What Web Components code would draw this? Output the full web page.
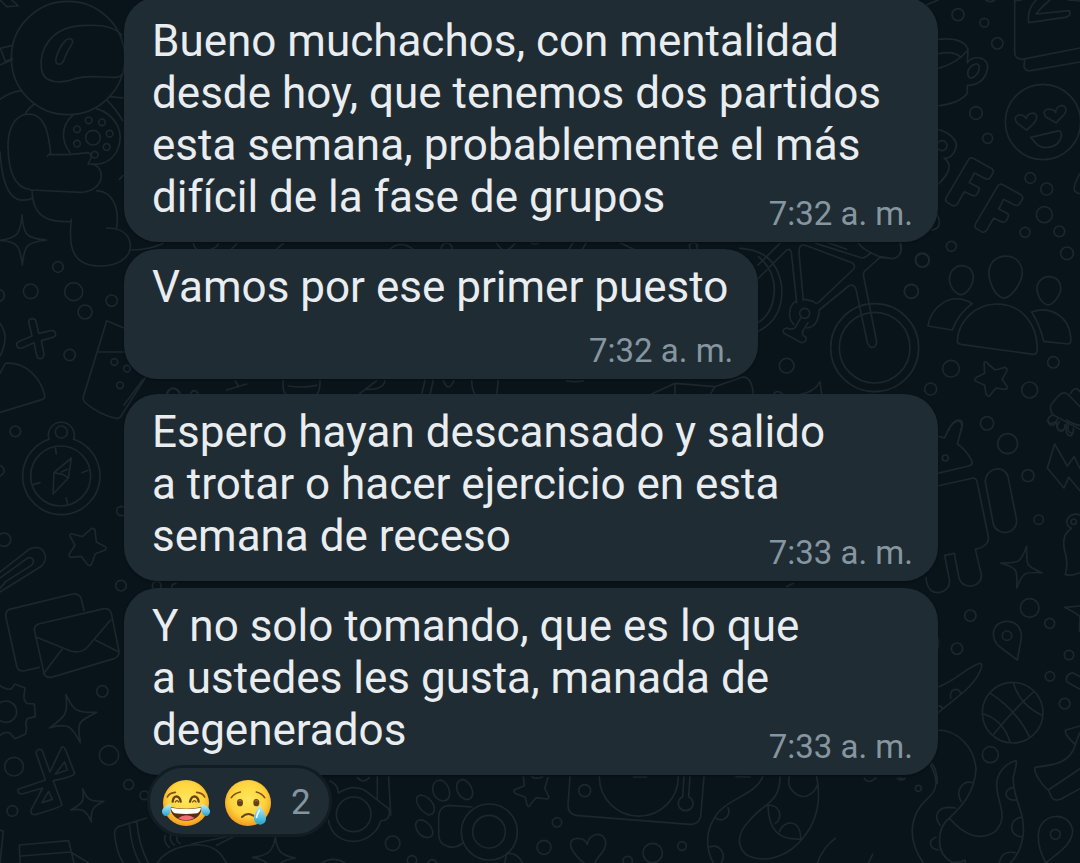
<!DOCTYPE html>
<html lang="es">
<head>
<meta charset="utf-8">
<meta name="viewport" content="width=device-width, initial-scale=1">
<title>Chat</title>
<style>
  html, body { margin: 0; height: 100%; }
  body { background: #08141a; overflow: hidden; font-family: Roboto, "Noto Sans", sans-serif; }
</style>
</head>
<body>
<chat-thread>
  <chat-message wide first time="7:32 a. m.">Bueno muchachos, con mentalidad<br>desde hoy, que tenemos dos partidos<br>esta semana, probablemente el más<br>difícil de la fase de grupos</chat-message>
  <chat-message stacked time="7:32 a. m.">Vamos por ese primer puesto</chat-message>
  <chat-message wide spaced time="7:33 a. m.">Espero hayan descansado y salido<br>a trotar o hacer ejercicio en esta<br>semana de receso</chat-message>
  <chat-message wide time="7:33 a. m.">Y no solo tomando, que es lo que<br>a ustedes les gusta, manada de<br>degenerados<chat-reactions slot="reactions" count="2"><chat-emoji kind="joy"></chat-emoji><chat-emoji kind="cry"></chat-emoji></chat-reactions></chat-message>
</chat-thread>

<template id="wallpaper">
<style>
  :host { display: block; position: absolute; inset: 0; z-index: -1; overflow: hidden; }
  svg { display: block; width: 100%; height: 100%; fill: none; stroke: #1b272d; stroke-width: 5; stroke-linecap: round; stroke-linejoin: round; }
</style>
<svg viewBox="0 0 3240 2589" preserveAspectRatio="xMinYMin slice" aria-hidden="true">
  <!-- upper left: astronaut, sparkle, glass -->
  <g>
    <path d="M0 0L20 20L55 18L35 0M0 145L38 136M2 148L16 184M0 195L36 180M16 184L38 176M0 298Q30 276 64 272M104 312Q84 325 76 342M330 290L372 294M322 302Q350 330 368 362M358 538L370 526M0 455Q8 590 60 600Q85 602 98 594"/>
    <circle cx="204" cy="174" r="170"/>
    <path d="M365 105C335 70 270 75 240 77C150 85 118 150 124 205C130 255 190 250 225 236C270 222 320 235 350 232Q362 230 368 222M194 124C204 112 222 114 217 130C204 150 198 160 191 182C184 198 164 196 168 176C172 158 182 138 194 124ZM218 346C180 380 185 425 210 458M290 326C350 345 375 400 352 450C335 485 305 495 275 492"/>
    <circle cx="279" cy="413" r="22"/><circle cx="266" cy="361" r="10"/><circle cx="306" cy="367" r="10"/><circle cx="329" cy="401" r="10"/><circle cx="320" cy="441" r="10"/><circle cx="284" cy="464" r="10"/><circle cx="231" cy="431" r="10"/><circle cx="231" cy="388" r="10"/>
    <path d="M142 468Q148 462 152 460C146 400 135 342 85 342C35 346 24 400 24 440C26 510 40 565 95 570L242 577C315 574 320 500 275 492L264 492L273 474Q275 460 262 458Q230 462 200 464L148 464M96 572C98 635 125 670 212 664M290 572C340 575 358 625 350 682M214 658C205 740 215 798 300 798C345 798 392 780 391 735C388 700 360 684 320 684M394 750Q450 750 490 730"/>
    <path d="M66 645C70 700 75 716 140 720C80 726 72 738 67 795C60 740 55 724 0 721C52 715 62 700 66 645Z"/>
    <circle cx="174" cy="801" r="16"/><circle cx="92" cy="874" r="22"/><circle cx="221" cy="875" r="27"/><circle cx="335" cy="902" r="17"/><circle cx="255" cy="936" r="21"/><circle cx="209" cy="1065" r="17"/><circle cx="-5" cy="886" r="18"/>
    <path d="M86 966C86 954 104 952 108 964L116 1000L152 992C168 990 172 1008 158 1012L124 1022L132 1062C132 1078 114 1082 110 1066L102 1028L66 1044C50 1048 44 1030 58 1024L96 1008ZM0 970Q30 1010 0 1068M0 1120L16 1090C75 1085 120 1130 134 1185Q136 1195 128 1198L0 1237"/>
    <path d="M372 984L320 962L250 1190Q248 1202 258 1210Q300 1245 352 1256L362 1250L438 1130M296 1056H372"/>
    <circle cx="343" cy="1086" r="10"/><circle cx="381" cy="1106" r="10"/><circle cx="360" cy="1156" r="10"/><circle cx="520" cy="1186" r="21"/>
  </g>
  <!-- lower left: compass, clip, letters, gear, camera -->
  <g transform="translate(0 1260)">
    <circle cx="46" cy="34" r="16"/><circle cx="182" cy="168" r="90"/><circle cx="184" cy="36" r="18"/><circle cx="-4" cy="152" r="16"/><circle cx="364" cy="273" r="14"/><circle cx="12" cy="359" r="20"/><circle cx="363" cy="497" r="16"/><circle cx="307" cy="814" r="17"/><circle cx="327" cy="1006" r="29"/><circle cx="42" cy="1040" r="28"/><circle cx="37" cy="1173" r="16"/><circle cx="386" cy="1094" r="15"/><circle cx="433" cy="1126" r="13"/><circle cx="18" cy="875" r="32"/>
    <path d="M147 58A39 39 0 1 1 221 58A116 116 0 1 1 147 58M166 84L169 102M246 158L264 151M99 194L120 188M198 234L203 252M214 114L162 158L159 222L205 174ZM162 158L190 164L205 174M184 156L202 148"/>
    <path d="M273 327Q280 322 285 330L289 366L316 380Q322 386 314 391L286 401L275 432Q270 440 263 434L244 409L212 412Q204 408 209 400L225 376L210 348Q208 340 218 342L247 350Z"/>
    <path d="M0 456L90 386C130 372 150 410 125 438L0 516M0 474L80 416C96 406 108 424 94 436L18 484M0 505L18 484"/>
    <path d="M118 742L70 753Q54 754 50 738L18 592Q14 576 28 568L218 522Q236 520 243 534L252 572M104 634Q100 618 116 612L312 566Q328 564 334 580L357 694Q358 710 342 716L154 772Q138 774 132 760ZM106 650L210 692Q240 702 260 684L332 600M186 688L130 762M286 660L352 694"/>
    <path d="M0 797Q24 812 34 806L45 792L75 804L72 828Q70 838 80 850L103 852L106 890L82 896Q74 908 80 922L77 942L45 956L30 940Q15 932 0 946"/>
    <path d="M198 824C218 868 226 880 290 877C235 904 230 905 241 968C215 920 205 906 148 924C196 890 205 884 198 824Z"/>
    <path d="M108 998Q112 984 126 990L150 1056L184 984Q190 976 196 988L224 1060Q220 1070 160 1082L186 1154Q186 1160 106 1184Q92 1184 92 1172L128 1104L66 1122Q52 1122 54 1108L136 1080ZM194 1026L202 1050L166 1062ZM146 1114L157 1138L126 1148Z"/>
    <path d="M248 1106C260 1138 268 1145 312 1144C278 1160 272 1168 274 1206C260 1172 248 1164 212 1170C248 1150 254 1145 248 1106Z"/>
    <path d="M0 1230L10 1234L0 1329M60 1329L58 1275L206 1262L222 1329M64 1308L212 1296L266 1329M440 1194L355 1220Q342 1228 344 1245Q350 1300 370 1329M388 1212Q395 1290 420 1329M410 1205Q418 1280 445 1329M472 1329C500 1280 610 1250 660 1300L680 1329"/>
    <path d="M496 1245A34 34 0 0 0 508 1282M512 1245A25 25 0 0 0 524 1275M532 1248A15 15 0 0 0 540 1270M575 1272L690 1248M650 1276L700 1250"/>
    <path d="M826 1250C830 1290 840 1306 886 1314C848 1322 836 1326 834 1350M826 1250C820 1290 810 1306 758 1312C790 1320 810 1326 812 1350"/>
    <circle cx="1000" cy="1380" r="62"/>
  </g>
  <!-- strip between the bubbles -->
  <g>
    <path d="M580 730Q585 750 600 752Q650 750 655 730M690 752L715 726M825 752L850 730M1165 752Q1200 715 1245 752M1490 730Q1515 770 1545 730M1700 760L1720 726M1740 760L1760 726M1860 728L1910 752M2070 750L2068 735Q2080 720 2092 735L2090 755"/>
    <circle cx="1340" cy="745" r="16"/><circle cx="1605" cy="715" r="17"/>
    <path d="M372 1215L430 1138M500 1184Q520 1145 540 1184M570 1184Q582 1160 596 1184M680 1170L740 1152M705 1142L716 1160M850 1140Q845 1190 870 1184M960 1142Q960 1190 940 1184M865 1158Q910 1165 950 1156M1075 1184L1130 1142M1100 1168Q1150 1170 1155 1142M1265 1184L1275 1140M1290 1184L1300 1140M1330 1142Q1345 1180 1362 1142M1415 1140Q1415 1165 1425 1184M1495 1140L1490 1184M1700 1142Q1725 1148 1750 1142M1950 1184L2025 1150L2025 1184M2025 1150L2145 1160L2225 1132Q2255 1125 2260 1184M2145 1160L2130 1184M2320 1184Q2330 1165 2350 1184M2400 1184Q2445 1175 2460 1145L2465 1184"/>
    <circle cx="470" cy="1757" r="13"/><path d="M515 1765Q515 1750 528 1750M2360 1760L2380 1750"/>
  </g>
  <!-- bicycle -->
  <g transform="translate(2220 690)">
    <path d="M0 55Q110 60 125 170Q132 275 40 310M55 80Q105 120 103 185Q98 255 50 280M50 150L135 65Q150 50 154 68L170 218M54 105L122 38M190 212L177 68Q176 40 196 46L336 98Q350 108 338 120L238 215Q228 225 220 214L195 208M170 212C150 220 143 255 154 274L162 284M200 294Q234 292 238 240L326 168Q342 160 348 178L382 338Q390 358 404 350Q412 344 409 330L370 135Q370 125 378 120L420 82L458 86Q490 80 480 40M228 40L366 84Q378 84 390 70M355 40Q375 65 420 80L458 86M265 38L320 58"/>
    <circle cx="194" cy="250" r="15"/>
    <path d="M182 264L166 292Q156 302 140 294Q124 298 132 310L184 338Q202 336 198 322Q184 314 188 304L204 278"/>
    <circle cx="404" cy="353" r="132"/><circle cx="404" cy="353" r="106"/><circle cx="140" cy="407" r="22"/><circle cx="547" cy="91" r="20"/><circle cx="514" cy="184" r="21"/>
  </g>
  <!-- upper right: cup, laptop, faces, BFF, group -->
  <g transform="translate(2700 0)">
    <path d="M80 14L115 0M258 0Q270 10 284 0M344 0V160Q346 176 366 178L540 144M344 2L365 0M374 178L372 200Q376 214 392 212L540 186M408 0Q380 30 386 68L495 52Q515 48 508 32L408 42Q430 15 450 0M505 0L540 3"/>
    <circle cx="174" cy="44" r="18"/><circle cx="253" cy="68" r="13"/><circle cx="292" cy="130" r="17"/><circle cx="228" cy="339" r="19"/><circle cx="263" cy="415" r="15"/><circle cx="391" cy="534" r="16"/><circle cx="440" cy="567" r="18"/><circle cx="433" cy="644" r="24"/><circle cx="375" cy="697" r="15"/><circle cx="478" cy="694" r="16"/><circle cx="501" cy="760" r="19"/><circle cx="154" cy="739" r="15"/><circle cx="67" cy="780" r="21"/><circle cx="34" cy="874" r="21"/><circle cx="153" cy="1106" r="25"/><circle cx="92" cy="1167" r="18"/><circle cx="460" cy="1087" r="17"/><circle cx="389" cy="1170" r="24"/><circle cx="261" cy="1270" r="20"/>
    <path d="M112 118Q190 110 204 148L202 188Q215 170 240 174Q268 182 262 210Q250 255 202 256V280Q180 310 112 318M112 162Q160 150 183 172M112 206Q170 190 202 152M204 212C212 195 238 180 238 205C235 232 198 250 204 212Z"/>
    <circle cx="429" cy="366" r="113"/>
    <path d="M381 391L350 368C335 345 368 335 379 356C380 340 410 330 410 352C410 370 390 378 381 391ZM469 369L437 350C420 325 458 320 467 338C466 315 498 308 498 330C498 348 475 355 469 369ZM392 412L478 392Q490 400 480 420C465 448 425 448 408 430ZM540 520Q515 565 526 575Q535 582 540 580"/>
    <path d="M112 388C150 395 175 425 168 444C162 465 145 478 132 474C155 490 155 515 112 555"/><circle cx="126" cy="437" r="15"/>
    <path d="M206 478Q212 470 222 476L276 506Q284 514 277 522L269 535Q262 540 254 535L223 519L208 548L234 561Q240 566 236 573L230 584Q224 590 216 586L193 575L172 612Q165 620 156 616L140 606Q134 600 139 592Z"/>
    <path transform="translate(88 79)" d="M206 478Q212 470 222 476L276 506Q284 514 277 522L269 535Q262 540 254 535L223 519L208 548L234 561Q240 566 236 573L230 584Q224 590 216 586L193 575L172 612Q165 620 156 616L140 606Q134 600 139 592Z"/>
    <path d="M95 690Q130 685 112 645M0 720Q8 745 0 762"/>
    <path d="M310 895C280 885 250 820 278 785C305 758 348 765 362 796C380 830 340 892 310 895ZM180 884C155 875 138 840 156 812C180 785 218 798 220 830C220 855 200 885 180 884ZM442 915C418 908 402 866 417 845C440 818 480 830 482 862C484 885 458 916 442 915Z"/>
    <path d="M172 1022C175 965 225 912 290 912C360 912 410 965 412 1045Q412 1064 400 1063L182 1033Q170 1030 172 1022ZM217 911Q175 940 157 990L84 978C90 925 150 870 217 911ZM395 936Q420 975 431 1024L505 1032Q515 1030 512 1010C508 950 450 915 395 936Z"/>
    <path d="M252 1087Q258 1082 264 1092L286 1110L315 1102Q324 1105 320 1114L306 1138L322 1160Q324 1168 314 1168L288 1164L270 1186Q264 1192 258 1182L254 1156L226 1143Q220 1138 230 1132L254 1120Z"/>
    <path d="M540 1220L505 1184Q490 1172 475 1188L456 1210Q444 1225 460 1245L540 1288M512 1180Q525 1155 540 1175M456 1245Q435 1258 450 1274Q465 1280 472 1258M478 1265Q465 1285 480 1292Q495 1290 500 1272M505 1275Q500 1295 515 1300M146 1290Q165 1250 186 1264Q190 1275 182 1290"/>
  </g>
  <!-- lower right: android, sparkle, ball, pins, tentacles -->
  <g transform="translate(2700 1260)">
    <circle cx="323" cy="71" r="30"/><circle cx="384" cy="167" r="18"/><circle cx="136" cy="114" r="9"/><circle cx="416" cy="299" r="14"/><circle cx="389" cy="564" r="28"/><circle cx="449" cy="610" r="15"/><circle cx="211" cy="587" r="17"/><circle cx="171" cy="686" r="17"/><circle cx="321" cy="647" r="14"/><circle cx="507" cy="705" r="14"/><circle cx="450" cy="769" r="14"/><circle cx="494" cy="851" r="16"/><circle cx="271" cy="1004" r="24"/><circle cx="55" cy="1105" r="9"/><circle cx="466" cy="1243" r="15"/><circle cx="521" cy="305" r="8"/>
    <path d="M112 48L134 54Q152 5 175 2Q190 8 184 28L172 72Q200 90 217 126Q218 134 206 138L112 160M112 198L220 174Q228 174 231 184L265 350C268 370 250 384 226 388L244 464Q246 490 216 498Q185 500 177 474L163 400L134 406L149 484Q148 512 118 518Q88 520 80 488L78 472M256 186C254 145 312 130 324 170L350 300C352 345 290 350 280 312Z"/>
    <path d="M442 0Q448 18 466 5M470 8Q468 35 488 33Q498 25 494 14M500 20Q495 45 512 48Q522 40 520 25M500 0Q520 14 540 16M464 72L442 144L492 204L506 172L540 212M464 72L502 138L522 110L540 146"/>
    <path d="M540 285Q512 275 500 302Q500 318 515 325Q480 345 496 400Q505 430 496 464Q520 468 540 458M540 558L494 562Q530 580 540 590L538 634M540 770L518 758Q495 764 500 785L540 808"/>
    <path d="M380 379C380 440 376 436 426 458C372 456 370 455 350 504C350 455 360 446 302 429C358 430 362 428 380 379Z"/>
    <path d="M352 720L296 678C270 650 276 610 316 604C356 602 370 635 362 665ZM438 1329Q410 1280 416 1235C425 1180 505 1170 518 1230C518 1275 470 1300 438 1329Z"/>
    <circle cx="338" cy="878" r="91"/>
    <path d="M268 818Q350 870 388 950M400 816Q330 880 280 944M340 788C355 840 385 865 426 886M250 882Q310 900 330 966"/>
    <path d="M112 802C170 780 195 745 240 730Q248 732 244 744C225 800 170 830 112 880M152 835Q148 808 170 808Q182 812 182 822M112 858Q125 856 127 866M112 650Q120 670 112 690"/>
    <path d="M112 930C180 930 225 990 228 1050C222 1120 185 1160 148 1194C110 1225 105 1300 155 1326Q175 1330 196 1320V1329M148 1194C190 1245 240 1265 285 1235C330 1190 290 1150 290 1095C290 1060 315 1030 348 1022Q352 1030 340 1070C335 1130 375 1170 370 1240C365 1290 345 1315 330 1329M92 1035C115 1080 115 1110 80 1138C35 1180 15 1250 70 1329M95 1030Q112 1050 112 1090M218 1088C185 1080 165 1115 184 1145M166 1164C120 1155 95 1180 120 1216M108 1252C85 1260 85 1285 116 1290M340 1102C310 1105 310 1145 348 1140M362 1192C325 1198 325 1252 368 1250M345 1298Q305 1290 298 1329"/>
    <path d="M540 918L498 930Q488 938 526 974Q530 960 540 938M526 974C510 1030 460 1035 405 1042C400 1060 430 1100 445 1110L540 1046M445 1110L456 1134Q465 1144 482 1138L540 1106M0 1072Q5 1080 14 1076"/>
  </g>
  <!-- bottom edge: whistle, paw, turntable -->
  <g transform="translate(960 2295)">
    <path d="M30 48Q55 60 55 84C85 65 120 60 150 88L205 130Q215 150 198 164L182 168C160 245 40 255 25 165M172 35V104M206 35L212 150M112 38Q130 58 148 38"/>
    <circle cx="101" cy="148" r="52"/><circle cx="218" cy="235" r="22"/><circle cx="276" cy="286" r="14"/><circle cx="337" cy="298" r="14"/>
    <path d="M358 105C330 90 332 45 362 45C390 55 402 105 370 108ZM430 100C405 85 402 48 428 43C455 50 475 102 438 104ZM326 150C295 135 275 95 302 90C335 92 362 145 326 150ZM322 218C290 215 275 170 298 165C325 160 360 215 322 218ZM456 126L385 121Q358 125 356 155V210C358 245 400 258 428 234"/>
    <circle cx="508" cy="201" r="84"/><circle cx="507" cy="200" r="49"/>
    <path d="M554 294L560 266Q590 260 608 294M610 35L613 62L584 74Q578 80 588 86L615 96L622 122Q628 128 632 118L648 98L682 102Q690 98 684 90L674 70L684 38M635 35Q650 44 668 35M750 35L744 120Q744 150 775 152L1110 178Q1135 178 1142 155L1152 35M838 35A118 118 0 0 0 1075 35M1092 35L1088 95A22 22 0 1 0 1106 95L1110 35M940 36H980"/>
    <circle cx="794" cy="77" r="18"/><circle cx="711" cy="172" r="14"/><circle cx="672" cy="247" r="21"/><circle cx="998" cy="264" r="29"/><circle cx="1086" cy="243" r="13"/><circle cx="923" cy="288" r="14"/>
    <path d="M792 294C755 265 740 230 762 222Q790 215 802 238C805 205 850 195 857 230C858 260 835 270 824 294"/>
  </g>
  <g transform="translate(2040 2295)">
    <path d="M248 35C225 95 130 100 100 165C75 205 80 260 100 294M300 35C300 115 250 115 210 165C175 200 165 240 200 270C260 300 330 270 372 215C420 155 420 85 410 35M328 35C318 70 350 98 378 94Q405 84 412 60M264 120C265 200 300 225 362 222M264 120C300 120 310 155 286 176M298 200C310 165 360 160 362 218M144 128C155 155 125 175 106 158M88 246C118 235 140 265 124 294M412 294Q430 245 466 220M565 294L578 268M553 40Q565 60 588 38M652 40Q662 50 674 40M168 35L210 36"/>
  </g>
</svg>
</template>

<template id="thread">
<style>
  :host { display: block; position: relative; z-index: 0; box-sizing: border-box; min-height: 100%; overflow: hidden; }
  main { display: flex; flex-direction: column; align-items: flex-start; gap: 7px; margin-top: -3px; padding: 0 142px 0 124px; }
</style>
<chat-wallpaper></chat-wallpaper>
<main><slot></slot></main>
</template>

<template id="message">
<style>
  :host { display: block; position: relative; color: #e9edf0; }
  :host([wide]) { width: 100%; }
  :host([spaced]) { margin-top: 8px; }
  article { display: grid; grid-template-columns: 1fr; box-sizing: border-box; padding: 12px 25px 8px 28px; border-radius: 34px; background: #202c33; box-shadow: 0 1px 2px #060f14; }
  :host([first]) article { padding-top: 18px; }
  p { grid-area: 1 / 1; margin: 0; padding-bottom: 11px; font-size: 44px; line-height: 52px; white-space: nowrap; }
  time { grid-area: 1 / 1; place-self: end; color: #8696a0; font-size: 33px; line-height: 40px; }
  :host([stacked]) p { padding: 0 5px 18px 0; }
  :host([stacked]) time { grid-area: 2 / 1; }
</style>
<article><p><slot></slot></p><time></time></article>
<slot name="reactions"></slot>
</template>

<template id="reactions">
<style>
  :host { display: block; position: absolute; left: 23px; top: 100%; margin-top: -10px; }
  button { display: flex; align-items: center; gap: 14px; box-sizing: border-box; height: 72px; margin: 0; padding: 4px 18px 0 12px; border: 3px solid #111d23; border-radius: 36px; background: #202c33; color: #8696a0; font: 35px/40px Roboto, "Noto Sans", sans-serif; }
  span { margin-left: 5px; }
</style>
<button type="button" aria-label="Reacciones"><slot></slot><span></span></button>
</template>

<template id="emoji">
<style>
  :host { display: block; }
  svg { display: block; width: 48px; height: 48px; }
  g { display: none; }
  :host([kind="joy"]) .joy, :host([kind="cry"]) .cry { display: block; }
</style>
<svg viewBox="0 0 144 144" fill="none" stroke-linecap="round" aria-hidden="true">
  <defs>
    <radialGradient id="skin" cx=".5" cy=".42" r=".58"><stop offset="0" stop-color="#ffe75c"/><stop offset=".65" stop-color="#fed43c"/><stop offset="1" stop-color="#f49a1e"/></radialGradient>
    <linearGradient id="tear" x1="0" y1="0" x2="0" y2="1"><stop offset="0" stop-color="#bdeffa"/><stop offset="1" stop-color="#21a5ce"/></linearGradient>
  </defs>
  <circle cx="72" cy="72" r="69" fill="url(#skin)"/>
  <g class="joy">
    <path d="M16 54Q22 41 40 40M104 40Q122 41 128 54" stroke="#82501b" stroke-width="5"/>
    <path d="M32 68Q34 52 44 52Q54 54 56 68M84 68Q88 52 98 52Q108 54 110 68" stroke="#65401c" stroke-width="7"/>
    <path d="M40 69Q45 61 50 69M92 69Q97 61 102 69" stroke="#65401c" stroke-width="4"/>
    <path d="M24 84Q72 94 120 84Q116 124 72 125Q30 124 24 84Z" fill="#5c2b15"/>
    <path d="M27 86Q72 94 117 86Q116 97 106 103Q72 107 38 103Q28 97 27 86Z" fill="#fffdf6"/>
    <path d="M48 118Q72 100 98 117Q72 130 48 118Z" fill="#ef6c75"/>
    <path d="M28 76Q8 78 1 92Q-3 104 8 111Q20 112 25 98ZM116 76Q136 78 143 92Q147 104 136 111Q124 112 119 98Z" fill="url(#tear)"/>
  </g>
  <g class="cry">
    <path d="M22 56Q30 43 49 39M97 39Q114 43 122 56" stroke="#82501b" stroke-width="5"/>
    <ellipse cx="48" cy="71" rx="9" ry="11" fill="#65401c"/><ellipse cx="97" cy="71" rx="9" ry="11" fill="#65401c"/>
    <path d="M44 66Q48 62 52 66M93 66Q97 62 101 66" stroke="#a37445" stroke-width="3"/>
    <path d="M54 114Q70 98 88 110" stroke="#65401c" stroke-width="6"/>
    <path d="M108 79Q88 108 90 120Q93 137 110 137Q126 134 126 118Q124 104 108 79Z" fill="url(#tear)"/>
    <path d="M106 94Q98 108 98 115" stroke="#e5fbff" stroke-width="5"/>
  </g>
</svg>
</template>

<script>
  class TemplateElement extends HTMLElement {
    constructor() {
      super();
      const template = document.getElementById(this.constructor.template);
      this.attachShadow({ mode: "open" }).append(template.content.cloneNode(true));
    }
  }
  class ChatWallpaper extends TemplateElement { static template = "wallpaper"; }
  class ChatThread extends TemplateElement { static template = "thread"; }
  class ChatEmoji extends TemplateElement { static template = "emoji"; }
  class ChatMessage extends TemplateElement {
    static template = "message";
    connectedCallback() {
      this.shadowRoot.querySelector("time").textContent = this.getAttribute("time");
    }
  }
  class ChatReactions extends TemplateElement {
    static template = "reactions";
    connectedCallback() {
      this.shadowRoot.querySelector("span").textContent = this.getAttribute("count");
    }
  }
  customElements.define("chat-wallpaper", ChatWallpaper);
  customElements.define("chat-thread", ChatThread);
  customElements.define("chat-emoji", ChatEmoji);
  customElements.define("chat-message", ChatMessage);
  customElements.define("chat-reactions", ChatReactions);
</script>
</body>
</html>
